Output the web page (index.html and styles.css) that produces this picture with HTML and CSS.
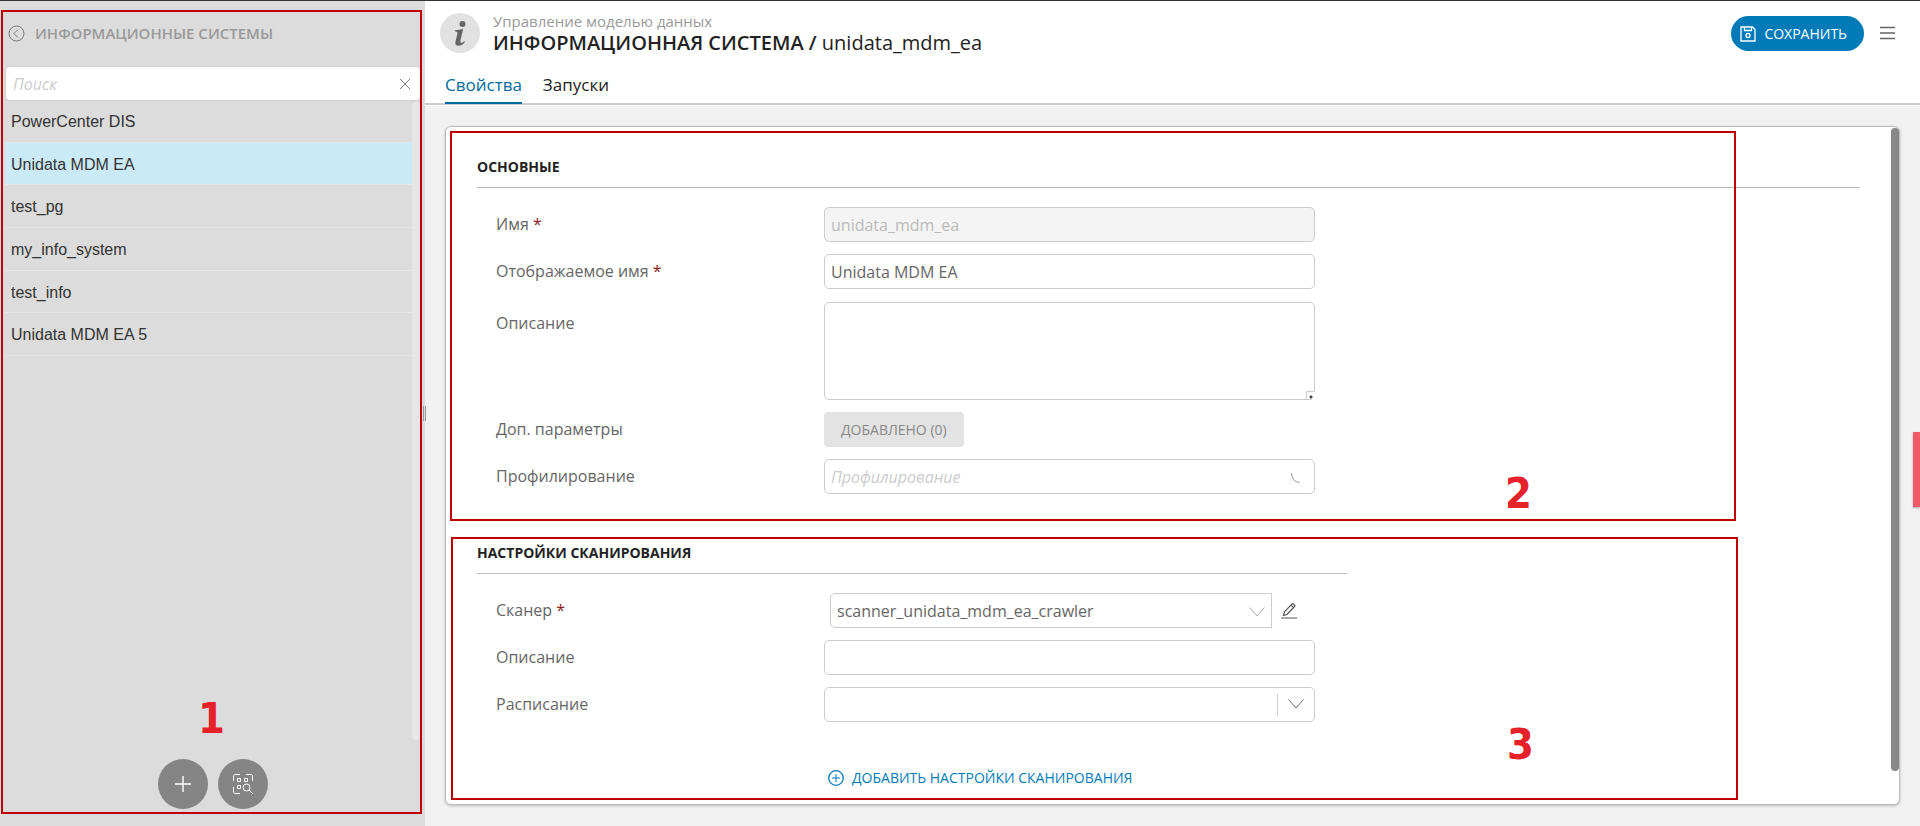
FILE: index.html
```html
<!DOCTYPE html>
<html lang="ru">
<head>
<meta charset="utf-8">
<title>Информационная система</title>
<link rel="stylesheet" href="styles.css">
</head>
<body>
<div class="app">
  <aside class="sidebar">
    <div class="sidebar-head">
      <button class="icon-btn" type="button" aria-label="Свернуть">
        <svg width="17" height="17" viewBox="0 0 17 17" fill="none" stroke="#777"><circle cx="8.5" cy="8.5" r="7.5"/><path d="M10 4.5 6 8.5l4 4"/></svg>
      </button>
      <h2 class="sidebar-title">ИНФОРМАЦИОННЫЕ СИСТЕМЫ</h2>
    </div>
    <div class="search">
      <input class="search-input" type="text" placeholder="Поиск" aria-label="Поиск">
      <button class="icon-btn" type="button" aria-label="Очистить">
        <svg width="12" height="12" viewBox="0 0 12 12" fill="none" stroke="#777"><path d="M1 1l10 10M11 1 1 11"/></svg>
      </button>
    </div>
    <div class="list-area">
      <ul class="list">
        <li class="item">PowerCenter DIS</li>
        <li class="item item-active">Unidata MDM EA</li>
        <li class="item">test_pg</li>
        <li class="item">my_info_system</li>
        <li class="item">test_info</li>
        <li class="item">Unidata MDM EA 5</li>
      </ul>
      <div class="list-track"></div>
    </div>
    <div class="sidebar-actions">
      <button class="round-btn" type="button" aria-label="Добавить">
        <svg width="16" height="16" viewBox="0 0 16 16" fill="none" stroke="#fff" stroke-width="1.4"><path d="M8 0v16M0 8h16"/></svg>
      </button>
      <button class="round-btn" type="button" aria-label="Сканировать">
        <svg width="20" height="20" viewBox="0 0 20 20" fill="none" stroke="#fff"><path d="M.5 7V1.5l1-1H7M13 .5h5.500l1 1V7M.5 13v5.500l1 1H7"/><path d="M4.500 4.500h3v3h-3zM11.500 4.500h3v3h-3zM4.500 11.500h3v3h-3z"/><circle cx="13.500" cy="13.500" r="3.500"/><path d="M16 16l4 4"/></svg>
      </button>
    </div>
    <div class="frame frame-sidebar"></div>
    <span class="mark mark-1">1</span>
    <span class="grip"></span>
  </aside>

  <main class="main">
    <header class="header">
      <div class="header-row">
        <span class="avatar">
          <svg width="40" height="40" viewBox="0 0 40 40" fill="#666"><circle cx="22.500" cy="11" r="3"/><path d="M15 17.200q4.500-.2 8.200-1.400l-2.700 11.500q-.6 2.700.7 2.700 1.200 0 3-1.800l.8.800q-3 3.800-6.500 3.800-4 0-3-4.300l2-8.300q.3-1.600-2.800-1.900z"/></svg>
        </span>
        <div class="headings">
          <div class="crumb">Управление моделью данных</div>
          <h1 class="title">ИНФОРМАЦИОННАЯ СИСТЕМА / <span class="title-name">unidata_mdm_ea</span></h1>
        </div>
        <button class="save" type="button">
          <svg width="16" height="16" viewBox="0 0 16 16" fill="none" stroke="#fff" stroke-width="1.3"><path d="M1 1h11.500L15 3.500V15H1z"/><path d="M4.500 1v3.500h7V1"/><circle cx="8" cy="9.500" r="2"/></svg>
          СОХРАНИТЬ
        </button>
        <button class="icon-btn" type="button" aria-label="Меню">
          <svg width="15" height="14" viewBox="0 0 15 14" fill="none" stroke="#666" stroke-width="1.500"><path d="M0 1.500h15M0 7h15M0 12.500h15"/></svg>
        </button>
      </div>
      <nav class="tabs">
        <a class="tab tab-active" href="#props">Свойства</a>
        <a class="tab" href="#runs">Запуски</a>
      </nav>
    </header>

    <div class="content">
      <form class="card">
        <section class="section">
          <h3 class="section-title">ОСНОВНЫЕ</h3>
          <div class="rows">
            <div class="row"><label class="label" for="name">Имя <span class="req">*</span></label><input class="field" id="name" type="text" value="unidata_mdm_ea" disabled></div>
            <div class="row"><label class="label" for="display">Отображаемое имя <span class="req">*</span></label><input class="field" id="display" type="text" value="Unidata MDM EA"></div>
            <div class="row row-area"><label class="label label-area" for="desc">Описание</label>
              <div class="area-wrap"><textarea class="field area" id="desc"></textarea><span class="resizer"></span></div></div>
            <div class="row"><label class="label" for="params">Доп. параметры</label><button class="added" id="params" type="button">ДОБАВЛЕНО (0)</button></div>
            <div class="row"><label class="label" for="profile">Профилирование</label>
              <div class="combo"><input class="combo-input" id="profile" type="text" placeholder="Профилирование">
                <svg width="16" height="16" viewBox="0 0 16 16" fill="none" stroke="#999"><path d="M.5 4q.5 9 8 9.500"/></svg></div></div>
          </div>
          <div class="frame frame-main"></div>
          <span class="mark mark-2">2</span>
        </section>
        <section class="section section-scan">
          <h3 class="section-title">НАСТРОЙКИ СКАНИРОВАНИЯ</h3>
          <div class="rows">
            <div class="row"><label class="label" for="scanner">Сканер <span class="req">*</span></label>
              <div class="scanner">
                <div class="select-wrap">
                  <select class="field select-scanner" id="scanner"><option>scanner_unidata_mdm_ea_crawler</option></select>
                  <svg class="chevron" width="16" height="10" viewBox="0 0 16 10" fill="none" stroke="#aaa"><path d="M.5.5 8 9 15.500.5"/></svg>
                </div>
                <button class="icon-btn" type="button" aria-label="Изменить">
                  <svg width="16" height="16" viewBox="0 0 16 16" fill="none" stroke="#555" stroke-width="1.200"><path d="M2.500 12.500l1-3.800 7.500-7.700q.8-.6 1.500 0l1 1q.7.800 0 1.500L6 11.500zM10 2.200l2.500 2.500M0 15h16"/></svg>
                </button>
              </div></div>
            <div class="row"><label class="label" for="scandesc">Описание</label><input class="field" id="scandesc" type="text"></div>
            <div class="row"><label class="label" for="schedule">Расписание</label>
              <div class="select-wrap">
                <select class="field" id="schedule"><option></option></select>
                <span class="split"></span>
                <svg class="chevron" width="16" height="10" viewBox="0 0 16 10" fill="none" stroke="#666"><path d="M.5.5 8 9 15.500.5"/></svg>
              </div></div>
          </div>
          <button class="add" type="button">
            <svg width="16" height="16" viewBox="0 0 16 16" fill="none" stroke="#007bb8"><circle cx="8" cy="8" r="7.300" stroke-width="1.300"/><path d="M8 4v8M4 8h8"/></svg>
            ДОБАВИТЬ НАСТРОЙКИ СКАНИРОВАНИЯ
          </button>
          <div class="frame frame-scan"></div>
          <span class="mark mark-3">3</span>
        </section>
        <div class="thumb"></div>
      </form>
    </div>
  </main>
  <div class="side-tab"></div>
</div>
</body>
</html>
```
FILE: styles.css
```css
* { box-sizing: border-box; }

body {
  margin: 0;
  font-family: "Open Sans", "Noto Sans", sans-serif;
  font-size: 16px;
  color: #666;
  background: #f1f1f1;
}

h1, h2, h3, ul { margin: 0; padding: 0; }
button, input, select, textarea { font: inherit; color: inherit; }

svg { display: block; flex: none; }

.app {
  position: relative;
  display: flex;
  min-height: 100vh;
  border-top: 1px solid #333;
}

.icon-btn {
  display: flex;
  padding: 0;
  border: 0;
  background: none;
}

/* Sidebar */
.sidebar {
  position: relative;
  flex: none;
  display: flex;
  flex-direction: column;
  width: 425px;
  padding: 9px 5px 17px 5px;
  background: #dcdcdc;
}

.sidebar-head {
  display: flex;
  align-items: center;
  gap: 10px;
  height: 46px;
  margin-bottom: 11px;
  padding-left: 3px;
}

.sidebar-title {
  font-size: 15px;
  font-weight: 600;
  color: #999;
}

.search {
  display: flex;
  align-items: center;
  height: 33px;
  margin-left: 1px;
  padding: 0 9px 0 7px;
  border-radius: 4px;
  background: #fff;
  box-shadow: 0 0 2px #bbb;
}

.search-input {
  flex: 1;
  min-width: 0;
  padding: 0;
  border: 0;
  outline: 0;
  background: none;
}

::placeholder {
  font-style: italic;
  color: #ccc;
  opacity: 1;
}

.list-area {
  flex: 1;
  display: flex;
  align-items: flex-start;
}

.list {
  flex: 1;
  display: flex;
  flex-direction: column;
  height: 256px;
  list-style: none;
}

.item {
  flex: 1;
  display: flex;
  align-items: center;
  padding: 2px 0 0 6px;
  border-bottom: 1px solid #e6e6e6;
  font-family: "Liberation Sans", Arial, sans-serif;
  color: #333;
}

.item-active { background: #caeaf7; }

.list-track {
  align-self: stretch;
  width: 8px;
  margin: 2px 0 19px;
  border-radius: 4px;
  background: #e6e6e6;
}

.sidebar-actions {
  display: flex;
  justify-content: center;
  gap: 10px;
}

.round-btn {
  display: flex;
  align-items: center;
  justify-content: center;
  width: 50px;
  height: 50px;
  padding: 0;
  border: 0;
  border-radius: 50%;
  background: #858585;
}

.grip {
  position: absolute;
  top: 405px;
  right: -1px;
  width: 3px;
  height: 15px;
  border: solid #999;
  border-width: 0 1px;
}

/* Annotation frames and numbers */
.frame {
  position: absolute;
  border: 2px solid #c00000;
  pointer-events: none;
}

.frame-sidebar { top: 9px; right: 3px; bottom: 12px; left: 1px; }
.frame-main { top: 4px; bottom: -1px; left: 4px; right: 163px; }
.frame-scan { top: 17px; bottom: 4px; left: 5px; right: 161px; }

.mark {
  position: absolute;
  font-family: "DejaVu Sans Condensed", "DejaVu Sans", sans-serif;
  font-size: 43px;
  font-weight: bold;
  line-height: 50px;
  color: #e62129;
}

.mark-1 { bottom: 83px; left: 198px; }
.mark-2 { right: 367px; bottom: 2px; }
.mark-3 { right: 365px; bottom: 35px; }

/* Header */
.main {
  flex: 1;
  min-width: 0;
  display: flex;
  flex-direction: column;
}

.header {
  display: flex;
  flex-direction: column;
  justify-content: space-between;
  height: 105px;
  padding: 11px 25px 0 15px;
  border-bottom: 1px solid #fff;
  background: #fff;
  box-shadow: inset 0 -2px #ccc;
}

.header-row {
  display: flex;
  align-items: flex-start;
}

.header-row .icon-btn { margin: 14px 0 0 16px; }

.avatar {
  width: 40px;
  height: 40px;
  margin-top: 1px;
  border-radius: 50%;
  background: #e1e1e1;
}

.headings {
  flex: 1;
  margin-left: 13px;
}

.crumb {
  font-size: 15px;
  line-height: 19px;
  color: #999;
}

.title {
  font-size: 20px;
  font-weight: 600;
  line-height: 24px;
  color: #222;
}

.title-name { font-weight: 400; }

.save {
  display: flex;
  align-items: center;
  gap: 8px;
  height: 35px;
  margin-top: 4px;
  padding: 0 17px 0 9px;
  border: 0;
  border-radius: 18px;
  font-size: 14px;
  color: #fff;
  background: #007bb8;
}

.tabs {
  display: flex;
  gap: 21px;
  padding-left: 5px;
  margin-bottom: 1px;
}

.tab {
  padding-bottom: 4px;
  border-bottom: 2px solid transparent;
  font-size: 17px;
  line-height: 26px;
  color: #222;
  text-decoration: none;
}

.tab-active {
  border-color: #006b9f;
  color: #006b9f;
}

/* Form card */
.content {
  flex: 1;
  display: flex;
  padding: 20px 20px 21px;
}

.card {
  position: relative;
  flex: 1;
  border: 1px solid #bbb;
  border-radius: 6px;
  background: #fff;
  box-shadow: 0 1px 3px #bbb;
}

.section {
  position: relative;
  padding: 30px 39px 26px 31px;
}

.section-scan { padding: 23px 39px 15px 31px; }

.section-title {
  padding-bottom: 10px;
  border-bottom: 1px solid #bbb;
  font-size: 14px;
  font-weight: 700;
  line-height: 20px;
  color: #222;
}

.section-scan .section-title { width: 870px; }

.rows {
  display: flex;
  flex-direction: column;
  gap: 12px;
  padding: 19px 0 0 19px;
}

.row {
  display: grid;
  grid-template-columns: 328px 491px;
  min-height: 35px;
}

.row-area { padding-top: 1px; }

.label { line-height: 34px; }
.label-area { line-height: 42px; }
.req { color: #8b1a1a; }

.field, .combo {
  width: 100%;
  height: 35px;
  padding: 0 6px;
  border: 1px solid #ccc;
  border-radius: 5px;
  outline: 0;
  background: #fff;
}

.field:disabled {
  color: #bbb;
  background: #f4f4f4;
}

.area-wrap { position: relative; }

.area {
  display: block;
  height: 98px;
  resize: none;
}

.resizer {
  position: absolute;
  right: 0;
  bottom: 1px;
  width: 9px;
  height: 8px;
  border: solid #ccc;
  border-width: 1px 0 0 1px;
  background: radial-gradient(circle at 4px 5px, #444 1px, #fff 2px);
}

.added {
  justify-self: start;
  height: 35px;
  padding: 0 17px;
  border: 0;
  border-radius: 4px;
  font-size: 14px;
  color: #888;
  background: #e3e3e3;
}

.combo {
  display: flex;
  align-items: center;
  padding-right: 7px;
}

.combo-input {
  flex: 1;
  min-width: 0;
  padding: 0;
  border: 0;
  outline: 0;
  background: none;
}

.scanner {
  display: flex;
  align-items: center;
  gap: 9px;
  padding-left: 6px;
}

.select-wrap { position: relative; }
.scanner .select-wrap { width: 442px; }

select.field {
  display: block;
  appearance: none;
}

.select-scanner { border-radius: 5px 0 0 5px; }

.chevron {
  position: absolute;
  top: 12px;
  right: 11px;
  pointer-events: none;
}

.scanner .chevron { right: 7px; top: 14px; }

.split {
  position: absolute;
  top: 7px;
  right: 37px;
  height: 22px;
  border-left: 1px solid #ccc;
}

.add {
  display: flex;
  align-items: center;
  gap: 8px;
  margin: 45px 0 0 351px;
  padding: 0;
  border: 0;
  font-size: 14px;
  line-height: 22px;
  color: #007bb8;
  background: none;
}

.thumb {
  position: absolute;
  top: 1px;
  right: 0;
  bottom: 33px;
  width: 8px;
  border-radius: 4px;
  background: #888;
}

.side-tab {
  position: absolute;
  top: 431px;
  right: 0;
  width: 7px;
  height: 75px;
  background: #f05a69;
  box-shadow: 0 1px 2px #aaa;
}
```
